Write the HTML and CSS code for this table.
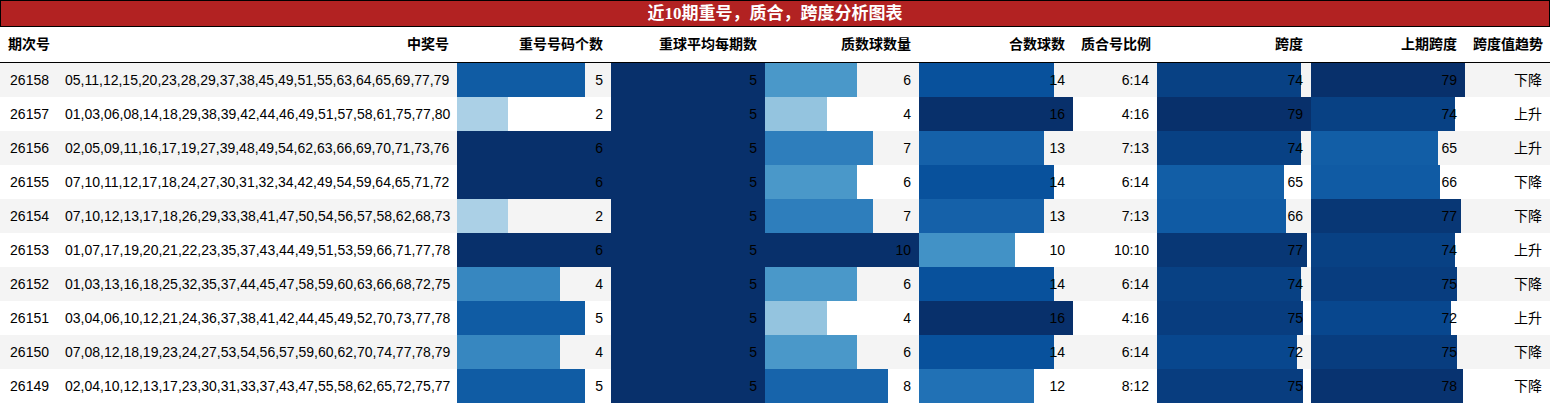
FILE: index.html
```html
<!DOCTYPE html>
<html lang="zh">
<head>
<meta charset="utf-8">
<title>近10期重号，质合，跨度分析图表</title>
<link rel="stylesheet" href="styles.css">
</head>
<body>
<table class="report">
  <caption class="report-title">近10期重号，质合，跨度分析图表</caption>
  <colgroup>
    <col class="c-issue"><col class="c-nums"><col class="c-bar"><col class="c-bar"><col class="c-bar"><col class="c-bar"><col class="c-ratio"><col class="c-bar"><col class="c-bar"><col class="c-trend">
  </colgroup>
  <thead>
    <tr><th>期次号</th><th>中奖号</th><th>重号号码个数</th><th>重球平均每期数</th><th>质数球数量</th><th>合数球数</th><th>质合号比例</th><th>跨度</th><th>上期跨度</th><th>跨度值趋势</th></tr>
  </thead>
  <tbody>
    <tr><td>26158</td><td>05,11,12,15,20,23,28,29,37,38,45,49,51,55,63,64,65,69,77,79</td>
      <td class="bar" style="--w:83.33%;--c:#105ca4">5</td><td class="bar" style="--w:100%;--c:#08306b">5</td><td class="bar" style="--w:60%;--c:#4a98c9">6</td><td class="bar" style="--w:87.5%;--c:#08519c">14</td><td>6:14</td><td class="bar" style="--w:93.67%;--c:#084184">74</td><td class="bar" style="--w:100%;--c:#08306b">79</td><td>下降</td></tr>
    <tr><td>26157</td><td>01,03,06,08,14,18,29,38,39,42,44,46,49,51,57,58,61,75,77,80</td>
      <td class="bar" style="--w:33.33%;--c:#abd0e6">2</td><td class="bar" style="--w:100%;--c:#08306b">5</td><td class="bar" style="--w:40%;--c:#94c4df">4</td><td class="bar" style="--w:100%;--c:#08306b">16</td><td>4:16</td><td class="bar" style="--w:100%;--c:#08306b">79</td><td class="bar" style="--w:93.67%;--c:#084184">74</td><td>上升</td></tr>
    <tr><td>26156</td><td>02,05,09,11,16,17,19,27,39,48,49,54,62,63,66,69,70,71,73,76</td>
      <td class="bar" style="--w:100%;--c:#08306b">6</td><td class="bar" style="--w:100%;--c:#08306b">5</td><td class="bar" style="--w:70%;--c:#2e7ebc">7</td><td class="bar" style="--w:81.25%;--c:#1561a9">13</td><td>7:13</td><td class="bar" style="--w:93.67%;--c:#084184">74</td><td class="bar" style="--w:82.28%;--c:#125ea6">65</td><td>上升</td></tr>
    <tr><td>26155</td><td>07,10,11,12,17,18,24,27,30,31,32,34,42,49,54,59,64,65,71,72</td>
      <td class="bar" style="--w:100%;--c:#08306b">6</td><td class="bar" style="--w:100%;--c:#08306b">5</td><td class="bar" style="--w:60%;--c:#4a98c9">6</td><td class="bar" style="--w:87.5%;--c:#08519c">14</td><td>6:14</td><td class="bar" style="--w:82.28%;--c:#125ea6">65</td><td class="bar" style="--w:83.54%;--c:#105ba4">66</td><td>下降</td></tr>
    <tr><td>26154</td><td>07,10,12,13,17,18,26,29,33,38,41,47,50,54,56,57,58,62,68,73</td>
      <td class="bar" style="--w:33.33%;--c:#abd0e6">2</td><td class="bar" style="--w:100%;--c:#08306b">5</td><td class="bar" style="--w:70%;--c:#2e7ebc">7</td><td class="bar" style="--w:81.25%;--c:#1561a9">13</td><td>7:13</td><td class="bar" style="--w:83.54%;--c:#105ba4">66</td><td class="bar" style="--w:97.47%;--c:#083775">77</td><td>下降</td></tr>
    <tr><td>26153</td><td>01,07,17,19,20,21,22,23,35,37,43,44,49,51,53,59,66,71,77,78</td>
      <td class="bar" style="--w:100%;--c:#08306b">6</td><td class="bar" style="--w:100%;--c:#08306b">5</td><td class="bar" style="--w:100%;--c:#08306b">10</td><td class="bar" style="--w:62.5%;--c:#4292c6">10</td><td>10:10</td><td class="bar" style="--w:97.47%;--c:#083775">77</td><td class="bar" style="--w:93.67%;--c:#084184">74</td><td>上升</td></tr>
    <tr><td>26152</td><td>01,03,13,16,18,25,32,35,37,44,45,47,58,59,60,63,66,68,72,75</td>
      <td class="bar" style="--w:66.67%;--c:#3787c0">4</td><td class="bar" style="--w:100%;--c:#08306b">5</td><td class="bar" style="--w:60%;--c:#4a98c9">6</td><td class="bar" style="--w:87.5%;--c:#08519c">14</td><td>6:14</td><td class="bar" style="--w:93.67%;--c:#084184">74</td><td class="bar" style="--w:94.94%;--c:#083d7f">75</td><td>下降</td></tr>
    <tr><td>26151</td><td>03,04,06,10,12,21,24,36,37,38,41,42,44,45,49,52,70,73,77,78</td>
      <td class="bar" style="--w:83.33%;--c:#105ca4">5</td><td class="bar" style="--w:100%;--c:#08306b">5</td><td class="bar" style="--w:40%;--c:#94c4df">4</td><td class="bar" style="--w:100%;--c:#08306b">16</td><td>4:16</td><td class="bar" style="--w:94.94%;--c:#083d7f">75</td><td class="bar" style="--w:91.14%;--c:#08478e">72</td><td>上升</td></tr>
    <tr><td>26150</td><td>07,08,12,18,19,23,24,27,53,54,56,57,59,60,62,70,74,77,78,79</td>
      <td class="bar" style="--w:66.67%;--c:#3787c0">4</td><td class="bar" style="--w:100%;--c:#08306b">5</td><td class="bar" style="--w:60%;--c:#4a98c9">6</td><td class="bar" style="--w:87.5%;--c:#08519c">14</td><td>6:14</td><td class="bar" style="--w:91.14%;--c:#08478e">72</td><td class="bar" style="--w:94.94%;--c:#083d7f">75</td><td>下降</td></tr>
    <tr><td>26149</td><td>02,04,10,12,13,17,23,30,31,33,37,43,47,55,58,62,65,72,75,77</td>
      <td class="bar" style="--w:83.33%;--c:#105ca4">5</td><td class="bar" style="--w:100%;--c:#08306b">5</td><td class="bar" style="--w:80%;--c:#1764ab">8</td><td class="bar" style="--w:75%;--c:#2171b5">12</td><td>8:12</td><td class="bar" style="--w:94.94%;--c:#083d7f">75</td><td class="bar" style="--w:98.73%;--c:#083370">78</td><td>下降</td></tr>
  </tbody>
</table>
</body>
</html>
```
FILE: styles.css
```css
html, body {
  margin: 0;
  padding: 0;
  background: #ffffff;
}

.report {
  width: 1550px;
  table-layout: fixed;
  border-collapse: collapse;
  border-spacing: 0;
  font-family: "Liberation Sans", "Noto Sans CJK SC", sans-serif;
  font-size: 14px;
  color: #000000;
}

.report-title {
  caption-side: top;
  box-sizing: border-box;
  height: 27px;
  background: #b22222;
  border: 1px solid #000000;
  color: #ffffff;
  font-family: "Liberation Serif", "Noto Sans CJK SC", serif;
  font-weight: bold;
  font-size: 17px;
  line-height: 25px;
  text-align: center;
}

.c-issue { width: 57px; }
.c-nums { width: 400px; }
.c-bar { width: 154px; }
.c-ratio { width: 84px; }
.c-trend { width: 85px; }

.report th,
.report td {
  padding: 8px;
  text-align: right;
  white-space: nowrap;
  overflow: visible;
}

.report th {
  font-weight: bold;
  line-height: 19px;
  border-bottom: 1px solid #000000;
  background: #ffffff;
}

.report td {
  line-height: 18px;
}

.report tbody tr:nth-child(odd) {
  background: #f4f4f4;
}

.report tbody tr:nth-child(even) {
  background: #ffffff;
}

.report td.bar {
  background: linear-gradient(90deg, var(--c) var(--w), transparent var(--w));
}
```
